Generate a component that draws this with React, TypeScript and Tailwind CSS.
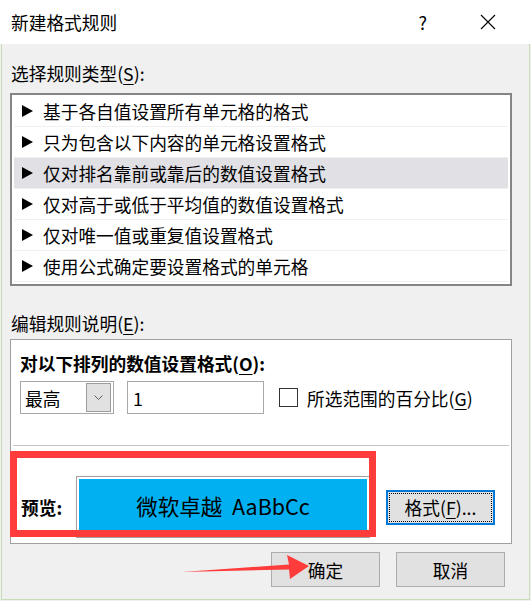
import React from "react"

const rules = [
  "基于各自值设置所有单元格的格式",
  "只为包含以下内容的单元格设置格式",
  "仅对排名靠前或靠后的数值设置格式",
  "仅对高于或低于平均值的数值设置格式",
  "仅对唯一值或重复值设置格式",
  "使用公式确定要设置格式的单元格",
]

function Key({ k }: { k: string }) {
  return <span className="underline underline-offset-[3px] decoration-1">{k}</span>
}

function Triangle() {
  return (
    <svg width="11" height="12" viewBox="0 0 11 12" className="shrink-0">
      <polygon points="0,0 11,6 0,12" fill="#000" />
    </svg>
  )
}

export default function App() {
  return (
    <div className="relative w-[531px] h-[601px] overflow-hidden bg-[#f0f0f0] text-black text-[17.7px] leading-[22px] font-['Noto_Sans_CJK_SC',sans-serif]">
      {/* title bar */}
      <div className="h-[44px] bg-white flex items-center pl-[11px]">
        <span>新建格式规则</span>
        <span className="ml-auto mr-[53px] text-[18px]">?</span>
        <svg width="16" height="16" viewBox="0 0 16 16" className="mr-[35px]">
          <path d="M1 1 L15 15 M15 1 L1 15" stroke="#000" strokeWidth="1.1" />
        </svg>
      </div>

      <div className="h-[556px] mx-[1px] border-x border-b border-[#c6ddb6] pl-[8px]">
        <div className="pt-[18px] pl-[1px]">
          选择规则类型(<Key k="S" />):
        </div>

        {/* rule list */}
        <div className="mt-[9px] w-[502px] h-[193px] border-2 border-[#858585] bg-white px-[2px] pt-[1px]">
          {rules.map((r, i) => (
            <div
              key={r}
              className={`h-[31px] flex items-center gap-[10px] pl-[8px] border-b border-[#f0f0f0] ${i === 2 ? "bg-[#e1e0e5]" : ""}`}
            >
              <Triangle />
              <span>{r}</span>
            </div>
          ))}
        </div>

        <div className="mt-[26px] pl-[1px]">
          编辑规则说明(<Key k="E" />):
        </div>

        {/* rule description */}
        <div className="mt-[5px] w-[502px] h-[205px] border border-[#a0a0a0] bg-white pt-[12px]">
          <div className="pl-[9px] font-bold">
            对以下排列的数值设置格式(<Key k="O" />):
          </div>
          <div className="mt-[7px] pl-[9px] flex items-center">
            <div className="w-[94px] h-[33px] border border-[#a8a8a8] flex items-stretch p-[1px] pr-[2px]">
              <span className="flex-1 pl-[3px] flex items-center">最高</span>
              <div className="w-[25px] border border-[#9c9c9c] bg-[#e1e1e1] flex items-center justify-center">
                <svg width="9" height="5" viewBox="0 0 9 5">
                  <path d="M0.5 0.5 L4.5 4.5 L8.5 0.5" fill="none" stroke="#606060" strokeWidth="1" />
                </svg>
              </div>
            </div>
            <div className="ml-[13px] w-[137px] h-[33px] border border-[#a8a8a8] pl-[5px] flex items-center">1</div>
            <div className="ml-[15px] w-[19px] h-[19px] border border-[#333333] bg-white" />
            <span className="ml-[9px]">
              所选范围的百分比(<Key k="G" />)
            </span>
          </div>

          <div className="mt-[31px] mx-[2px] h-px bg-[#c4c4c4]" />

          <div className="mt-[30px] pl-[10px] flex items-center">
            <span className="font-bold w-[55px]">预览:</span>
            <div className="w-[294px] h-[62px] border border-[#a0a0a0] p-[2px]">
              <div className="h-full bg-[#00b0f0] flex items-center justify-center text-[21.5px] pb-[2px]">
                微软卓越&nbsp;&nbsp;AaBbCc
              </div>
            </div>
            <button className="ml-[16px] w-[109px] h-[35px] border-2 border-[#0078d7] bg-[#e1e1e1] p-[1px]">
              <div className="h-full border border-dotted border-black flex items-center justify-center">
                格式(<Key k="F" />)...
              </div>
            </button>
          </div>
        </div>

        {/* buttons */}
        <div className="mt-[8px] flex gap-[16px] pl-[261px]">
          <button className="w-[109px] h-[35px] border border-[#adadad] bg-[#e1e1e1]">确定</button>
          <button className="w-[109px] h-[35px] border border-[#adadad] bg-[#e1e1e1]">取消</button>
        </div>
      </div>

      {/* annotation: red box */}
      <div className="absolute left-[10px] top-[451px] w-[366px] h-[86px] border-[7px] border-[#fe3c3c]" />

      {/* annotation: arrow */}
      <svg className="absolute left-0 top-0" width="531" height="601" viewBox="0 0 531 601">
        <polygon points="182,572 289,564.5 287,555 309,566 290,579 289,569.5" fill="#fe3c3c" />
      </svg>
    </div>
  )
}
